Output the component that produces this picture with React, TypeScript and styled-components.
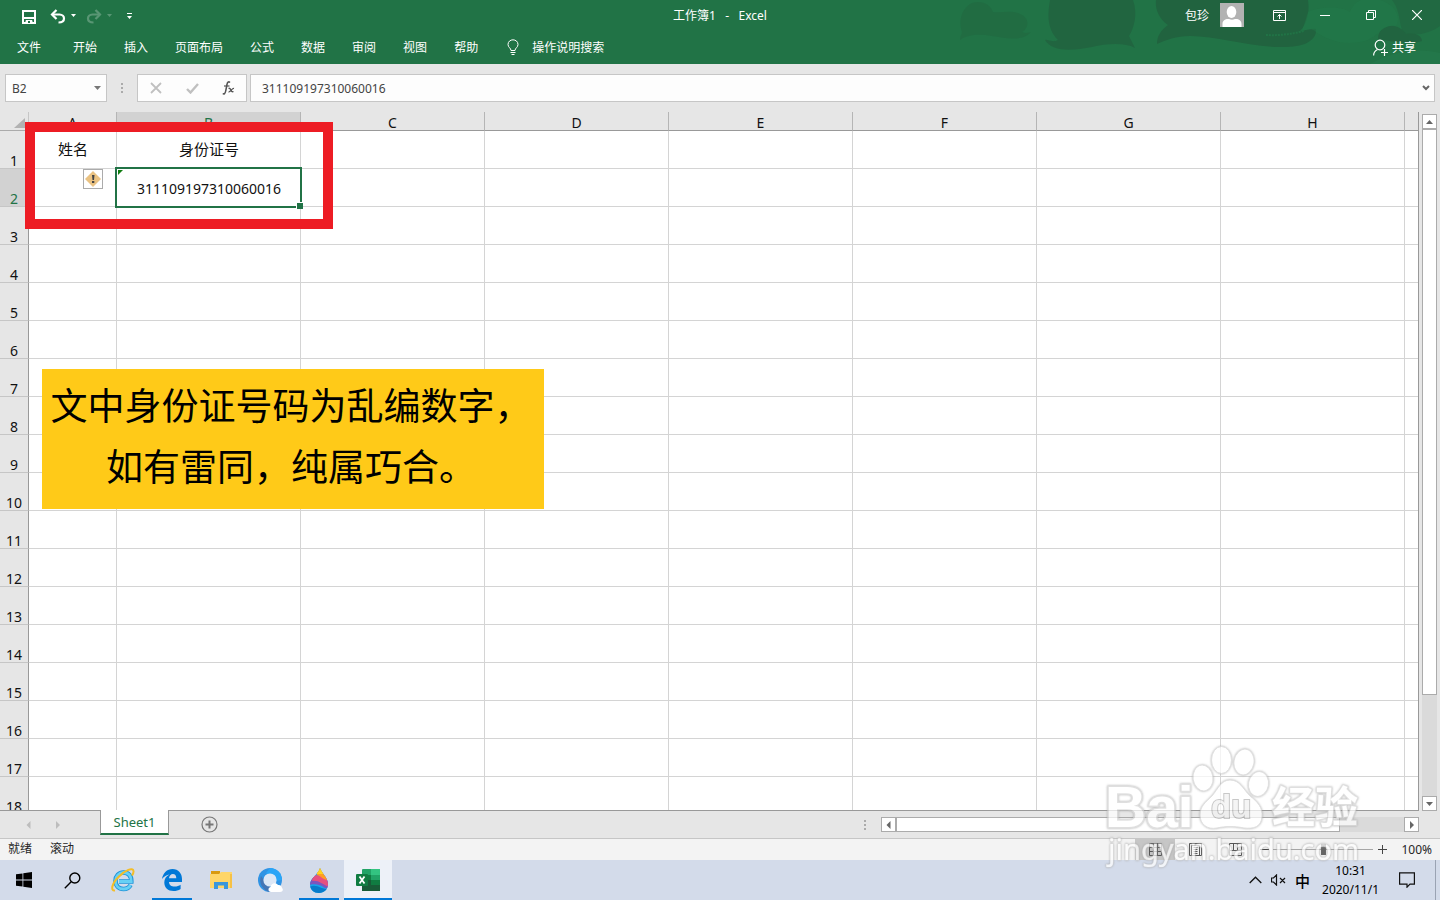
import React from "react";
import styled, { createGlobalStyle } from "styled-components";

const GREEN = "#217346";
const UI_FONT = '"Noto Sans", "Noto Sans CJK SC", sans-serif';

const GlobalStyle = createGlobalStyle`
  * { box-sizing: border-box; }
  body { margin: 0; font-family: ${UI_FONT}; font-size: 12px; color: #262626; }
  button { border: 0; padding: 0; background: none; color: inherit; font: inherit; }
  svg { display: block; }
`;

const Screen = styled.div`
  position: relative;
  display: flex;
  flex-direction: column;
  height: 100vh;
  overflow: hidden;
  background: #e6e6e6;
`;

/* ---------- header ---------- */

const Header = styled.header`
  position: relative;
  flex: none;
  background: ${GREEN};
  color: #fff;
`;

const HeaderArt = styled.svg`
  position: absolute;
  top: 0;
  right: 0;
`;

const TitleBar = styled.div`
  position: relative;
  display: grid;
  grid-template-columns: 1fr auto 1fr;
  align-items: center;
  height: 30px;
`;

const QuickAccess = styled.div`
  display: flex;
  align-items: center;
  padding: 3px 0 0 21px;
`;

const QuickButton = styled.button<{ $gap?: number; $dim?: boolean }>`
  margin-left: ${(p) => p.$gap ?? 0}px;
  opacity: ${(p) => (p.$dim ? 0.25 : 1)};
`;

const Title = styled.h1`
  margin: 0;
  font-size: 12px;
  font-weight: 400;
  white-space: pre;
`;

const Account = styled.div`
  display: flex;
  justify-content: flex-end;
  align-items: center;
`;

const Avatar = styled.svg`
  margin: 0 12px 0 11px;
  background: #b2b2b2;
`;

const WindowButton = styled.button`
  display: grid;
  place-items: center;
  width: 46px;
  height: 30px;
`;

const Ribbon = styled.nav`
  position: relative;
  display: flex;
  align-items: center;
  height: 34px;
  padding: 0 24px 0 17px;
`;

const RibbonTab = styled.button<{ $first?: boolean }>`
  margin-right: ${(p) => (p.$first ? 32 : 27)}px;
`;

const IconLabel = styled.button<{ $gap: number; $end?: boolean }>`
  display: flex;
  align-items: center;
  gap: ${(p) => p.$gap}px;
  margin-left: ${(p) => (p.$end ? "auto" : "2px")};
`;

/* ---------- formula bar ---------- */

const FormulaRow = styled.div`
  flex: none;
  display: flex;
  align-items: center;
  padding: 10px 5px;
`;

const Field = styled.div<{ $width?: number }>`
  display: flex;
  align-items: center;
  min-width: 0;
  height: 28px;
  flex: ${(p) => (p.$width ? `0 0 ${p.$width}px` : "1")};
  border: 1px solid #c6c6c6;
  background: #fdfdfd;
`;

const FieldInput = styled.input<{ $indent: number }>`
  flex: 1;
  width: 0;
  min-width: 0;
  padding: 0 0 0 ${(p) => p.$indent}px;
  border: 0;
  outline: 0;
  background: none;
  color: #444;
  font: 12px ${UI_FONT};
`;

const FieldIcon = styled.button`
  display: grid;
  place-items: center;
  width: 36px;
  height: 26px;
`;

const DropButton = styled.button`
  display: grid;
  place-items: center;
  width: 17px;
  height: 26px;
`;

const Grip = styled.svg<{ $side: number }>`
  flex: none;
  margin: 0 ${(p) => p.$side}px;
`;

/* ---------- grid ---------- */

const Workspace = styled.main`
  position: relative;
  flex: 1;
  min-height: 0;
  display: flex;
`;

const SheetPane = styled.div`
  flex: 1;
  min-width: 0;
  overflow: hidden;
  border-right: 1px solid #999;
  border-bottom: 1px solid #999;
  background: #fff;
`;

const Sheet = styled.table`
  width: 100%;
  table-layout: fixed;
  border-collapse: separate;
  border-spacing: 0;
  color: #111;
  font-size: 14px;
`;

const Col = styled.col<{ $w?: number }>`
  width: ${(p) => (p.$w ? `${p.$w}px` : "auto")};
`;

const Corner = styled.td`
  padding: 0;
  background: #e6e6e6;
  border-bottom: 1px solid #ababab;
  border-right: 1px solid #c6c6c6;
`;

const CornerMark = styled.svg`
  margin: 3px 0 0 14px;
`;

const ColHead = styled.th<{ $on?: boolean; $last?: boolean }>`
  height: 19px;
  padding: 4px 0 0;
  line-height: 14px;
  font-weight: 400;
  background: ${(p) => (p.$on ? "#d2d2d2" : "#e6e6e6")};
  color: ${(p) => (p.$on ? GREEN : "#111")};
  border-bottom: 1px solid #999;
  border-right: ${(p) => (p.$last ? "0" : "1px solid #b5b5b5")};
`;

const RowHead = styled.th<{ $on?: boolean }>`
  height: 38px;
  padding: 0;
  line-height: 14px;
  vertical-align: bottom;
  font-weight: 400;
  background: ${(p) => (p.$on ? "#d2d2d2" : "#e6e6e6")};
  color: ${(p) => (p.$on ? GREEN : "#111")};
  border-right: 1px solid #999;
  border-bottom: 1px solid #c6c6c6;
`;

const Cell = styled.td<{ $last?: boolean }>`
  position: relative;
  height: 38px;
  padding: 2px 0 0 1px;
  text-align: center;
  border-bottom: 1px solid #d4d4d4;
  border-right: ${(p) => (p.$last ? "0" : "1px solid #d4d4d4")};
`;

const CellLabel = styled.span`
  display: block;
  margin-bottom: 4px;
  font-size: 15px;
`;

const Selection = styled.div`
  position: absolute;
  z-index: 1;
  inset: -2px -2px -2px -2px;
  border: 2px solid ${GREEN};

  &::before {
    content: "";
    position: absolute;
    left: 1px;
    top: 1px;
    border-top: 5px solid #107c10;
    border-right: 5px solid transparent;
  }
  &::after {
    content: "";
    position: absolute;
    right: -3px;
    bottom: -3px;
    width: 6px;
    height: 6px;
    background: ${GREEN};
    border-left: 1px solid #fff;
    border-top: 1px solid #fff;
  }
`;

const WarningButton = styled.button`
  position: absolute;
  top: 0;
  right: 13px;
  display: grid;
  place-items: center;
  width: 20px;
  height: 20px;
  border: 1px solid #ababab;
  background: #fff;
`;

const Highlight = styled.div`
  position: absolute;
  z-index: 2;
  left: 25px;
  top: 10px;
  width: 308px;
  height: 107px;
  border: 10px solid #ed1c24;
`;

const Note = styled.p`
  position: absolute;
  z-index: 2;
  left: 42px;
  top: 257px;
  width: 502px;
  height: 140px;
  margin: 0;
  padding: 5px 4px 0 0;
  background: #ffca18;
  color: #000;
  font: 37px/61px "Noto Sans CJK SC", sans-serif;
  text-align: center;
  white-space: nowrap;
`;

/* ---------- scroll bars ---------- */

const ScrollBar = styled.div<{ $vertical?: boolean }>`
  display: flex;
  flex-direction: ${(p) => (p.$vertical ? "column" : "row")};
  flex: ${(p) => (p.$vertical ? "0 0 15px" : "538 1 0")};
  height: ${(p) => (p.$vertical ? "auto" : "15px")};
  margin: ${(p) => (p.$vertical ? "2px 3px 0" : "6px 21px 0 0")};
  background: #dadada;
`;

const ScrollArrow = styled.button`
  flex: none;
  display: grid;
  place-items: center;
  width: 15px;
  height: 15px;
  border: 1px solid #ababab;
  background: #fff;
`;

const ScrollThumb = styled.div<{ $part: number }>`
  flex: ${(p) => p.$part} 1 0;
  border: 1px solid #ababab;
  background: #fff;
`;

const ScrollRest = styled.div<{ $part: number }>`
  flex: ${(p) => p.$part} 1 0;
`;

/* ---------- sheet tabs and status ---------- */

const SheetBar = styled.div`
  flex: none;
  display: flex;
  height: 28px;
  border-bottom: 1px solid #c6c6c6;
`;

const TabStrip = styled.div`
  flex: 881 1 0;
  display: flex;
  align-items: center;
`;

const SheetNav = styled.div`
  display: flex;
  gap: 22px;
  width: 100px;
  padding-left: 25px;
`;

const SheetTab = styled.button`
  position: relative;
  align-self: flex-start;
  width: 69px;
  height: 25px;
  margin-top: -1px;
  border: 1px solid #999;
  border-top: 0;
  border-bottom: 2px solid ${GREEN};
  background: #fff;
  color: ${GREEN};
  font-size: 13px;
  line-height: 22px;
`;

const AddSheet = styled.button`
  margin-left: 32px;
`;

const TabGrip = styled(Grip)`
  margin: 0 13px 0 auto;
`;

const StatusBar = styled.footer`
  flex: none;
  display: flex;
  align-items: center;
  gap: 18px;
  height: 21px;
  padding: 0 8px;
  line-height: 18px;
  background: #f3f3f3;
`;

const StatusText = styled.span`
  padding-bottom: 2px;
`;

const ViewTools = styled.div`
  display: flex;
  align-items: center;
  margin-left: auto;
`;

const ViewButton = styled.button<{ $on?: boolean }>`
  display: grid;
  place-items: center;
  width: 40px;
  height: 21px;
  background: ${(p) => (p.$on ? "#c6c6c6" : "none")};
`;

const ZoomStep = styled.button`
  display: grid;
  place-items: center;
  width: 18px;
  height: 21px;
`;

const ZoomSlider = styled.input`
  appearance: none;
  width: 100px;
  height: 12px;
  margin: 0;
  background: linear-gradient(#a6a6a6, #a6a6a6) center / 100% 1px no-repeat;

  &::-webkit-slider-thumb {
    appearance: none;
    width: 5px;
    height: 11px;
    background: #666;
  }
`;

const ZoomValue = styled.span`
  margin-left: 10px;
`;

/* ---------- taskbar ---------- */

const Taskbar = styled.div`
  flex: none;
  display: flex;
  height: 40px;
  background: #d3dbea;
  color: #000;
`;

const TaskButton = styled.button<{ $running?: boolean; $active?: boolean }>`
  position: relative;
  display: grid;
  place-items: center;
  width: 48px;
  height: 40px;
  background: ${(p) => (p.$active ? "#edf1f8" : "none")};

  &::after {
    content: "";
    position: absolute;
    bottom: 0;
    left: ${(p) => (p.$active ? 0 : 4)}px;
    right: ${(p) => (p.$active ? 0 : 4)}px;
    height: ${(p) => (p.$running || p.$active ? 2 : 0)}px;
    background: #0078d7;
  }
`;

const AppList = styled.div`
  display: flex;
  gap: 1px;
  margin-left: 3px;
`;

const Tray = styled.div`
  display: flex;
  align-items: center;
  gap: 9px;
  margin-left: auto;
`;

const Ime = styled.button`
  font-size: 15px;
  font-weight: 500;
  color: #000;
`;

const Clock = styled.time`
  margin: 0 11px 0 3px;
  line-height: 19px;
  text-align: center;
`;

const ShowDesktop = styled.button`
  width: 5px;
  height: 40px;
  margin-left: 11px;
  border-left: 1px solid #9aa3b3;
`;

/* ---------- watermark ---------- */

const Watermark = styled.svg`
  position: absolute;
  z-index: 5;
  right: 70px;
  bottom: 26px;
  opacity: 0.72;
  pointer-events: none;
  filter: drop-shadow(0 0 1px #999);
`;

const columns = ["A", "B", "C", "D", "E", "F", "G", "H"];
const rows = Array.from({ length: 18 }, (_, i) => i + 1);
const ribbonTabs = ["文件", "开始", "插入", "页面布局", "公式", "数据", "审阅", "视图", "帮助"];

const Triangle = ({ dir, color = "#666" }: { dir: "up" | "down" | "left" | "right"; color?: string }) => {
  const d = {
    up: "M0 6 L3.5 2 L7 6Z",
    down: "M0 2 H7 L3.5 6Z",
    left: "M5.500 0 V8 L1.500 4Z",
    right: "M2 0 V8 L6 4Z",
  }[dir];
  return (
    <svg width="7" height="8" viewBox="0 0 7 8" aria-hidden="true">
      <path d={d} fill={color} />
    </svg>
  );
};

const GripDots = () => (
  <>
    <rect x="0" y="0" width="2" height="2" fill="#ababab" />
    <rect x="0" y="4" width="2" height="2" fill="#ababab" />
    <rect x="0" y="8" width="2" height="2" fill="#ababab" />
  </>
);

const UndoIcon = ({ flip }: { flip?: boolean }) => (
  <svg width="16" height="16" viewBox="0 0 16 16" fill="none" stroke="#fff" strokeWidth="2.200">
    <g transform={flip ? "translate(16 0) scale(-1 1)" : undefined}>
      <path d="M2 5.500 H9.500 C12.500 5.500 14 7.500 14 9.500 C14 12 12 13.500 8.500 13.500" />
      <path d="M6.500 1 L2 5.500 L6.500 10" />
    </g>
  </svg>
);

const SmallCaret = () => (
  <svg width="5" height="5" viewBox="0 0 5 5">
    <path d="M0 0 H5 L2.500 3Z" fill="#fff" />
  </svg>
);

function AppHeader() {
  return (
    <Header>
      <HeaderArt width="500" height="64" viewBox="0 0 500 64" aria-hidden="true">
        <g fill="#21633f">
          <path
            opacity=".45"
            d="M22 32 C18 20 22 8 32 3 C40 0 50 3 53 12 C62 13 72 10 80 14 C90 18 89 28 82 32 C86 34 91 32 91 32 C82 42 66 38 52 36 C40 34 28 34 20 40 C20 36 22 34 22 32Z"
          />
          <path
            opacity=".85"
            d="M110 0 H193 C198 14 194 28 189 36 L195 48 C184 42 166 44 152 47 C132 51 112 52 105 40 C108 39 112 43 118 40 C106 28 108 12 110 0Z"
          />
          <path d="M216 0 H368 C370 14 366 26 359 32 C366 30 372 28 376 29 C377 38 368 47 346 47 C310 48 280 36 250 36 C236 36 226 40 217 44 C217 36 221 30 228 25 C218 18 215 8 216 0Z" />
          <path opacity=".6" d="M452 0 H500 V26 C492 32 480 36 466 34 C458 30 462 12 452 0Z" />
          <path opacity=".9" d="M438 39 C438 30 446 25 454 26 C460 27 464 31 466 34 C474 32 482 35 482 41 C474 44 452 42 438 39Z" />
        </g>
        <path d="M368 12 C380 6 402 6 410 12 C416 -4 430 -2 440 0 C454 4 462 16 456 26 C440 24 438 40 420 42 C400 46 385 38 376 32 C372 28 366 30 362 31Z" fill="#227a4a" opacity=".5" />
        <path d="M326 35 q18 1 38 -4" fill="none" stroke={GREEN} strokeWidth="2" strokeDasharray="2 1" />
        <path d="M430 64 C455 50 480 48 500 53 V64Z" fill="#25794c" opacity=".7" />
      </HeaderArt>
      <TitleBar>
        <QuickAccess>
          <QuickButton aria-label="保存">
            <svg width="16" height="16" viewBox="0 0 16 16" fill="none" stroke="#fff">
              <path d="M2 2 H14 V14 H2Z" strokeWidth="2" />
              <path d="M2 9 H14" strokeWidth="2" />
              <path d="M5 14 V11.500 H11 V14" strokeWidth="1" fill="#fff" />
              <rect x="7" y="12" width="2" height="2" fill={GREEN} stroke="none" />
            </svg>
          </QuickButton>
          <QuickButton $gap={13} aria-label="撤消">
            <UndoIcon />
          </QuickButton>
          <QuickButton $gap={5} aria-label="撤消列表">
            <SmallCaret />
          </QuickButton>
          <QuickButton $gap={10} $dim aria-label="恢复">
            <UndoIcon flip />
          </QuickButton>
          <QuickButton $gap={5} $dim aria-label="恢复列表">
            <SmallCaret />
          </QuickButton>
          <QuickButton $gap={15} aria-label="自定义快速访问工具栏">
            <svg width="5" height="7" viewBox="0 0 5 7">
              <path d="M0 0 H5 V1 H0Z M0 3 H5 L2.500 6Z" fill="#fff" />
            </svg>
          </QuickButton>
        </QuickAccess>
        <Title>{"工作簿1   -   Excel"}</Title>
        <Account>
          <span>包珍</span>
          <Avatar width="24" height="24" viewBox="0 0 24 24" aria-hidden="true">
            <ellipse cx="11.500" cy="9" rx="4.800" ry="6" fill="#fff" />
            <path d="M2.500 24 V21 C2.500 17 6 15.500 9 16 C11 17 13 17 15 16 C18 15.500 21.500 17 21.500 21 V24Z" fill="#fff" />
          </Avatar>
          <WindowButton aria-label="功能区显示选项">
            <svg width="13" height="11" viewBox="0 0 13 11" fill="none" stroke="#fff">
              <path d="M.5 .5 H12.500 V10.500 H.5Z M.5 2.500 H12.500 M6.500 9 V4.500 M4.500 6.500 L6.500 4.500 L8.500 6.500" />
            </svg>
          </WindowButton>
          <WindowButton aria-label="最小化">
            <svg width="10" height="1" viewBox="0 0 10 1">
              <rect width="10" height="1" fill="#fff" />
            </svg>
          </WindowButton>
          <WindowButton aria-label="还原">
            <svg width="10" height="10" viewBox="0 0 10 10" fill="none" stroke="#fff">
              <path d="M.5 2.500 H7.500 V9.500 H.5Z M2.500 2.500 V.5 H9.500 V7.500 H7.500" />
            </svg>
          </WindowButton>
          <WindowButton aria-label="关闭">
            <svg width="10" height="10" viewBox="0 0 10 10" stroke="#fff" strokeWidth="1.200">
              <path d="M0 0 L10 10 M10 0 L0 10" />
            </svg>
          </WindowButton>
        </Account>
      </TitleBar>
      <Ribbon>
        {ribbonTabs.map((tab, i) => (
          <RibbonTab key={tab} $first={i === 0}>
            {tab}
          </RibbonTab>
        ))}
        <IconLabel $gap={13}>
          <svg width="12" height="17" viewBox="0 0 12 17" fill="none" stroke="#fff">
            <path d="M4 11.500 C4 9 1 8.500 1 5.500 C1 2.500 3.500 .8 6 .8 C8.500 .8 11 2.500 11 5.500 C11 8.500 8 9 8 11.500Z M3.500 13.500 H8.500 M4.500 15.500 H7.500" />
          </svg>
          操作说明搜索
        </IconLabel>
        <IconLabel $gap={4} $end>
          <svg width="15" height="17" viewBox="0 0 15 17" fill="none" stroke="#fff" strokeWidth="1.200">
            <circle cx="7" cy="6" r="4.800" />
            <path d="M.6 16.500 C.6 13 2.500 11.500 4.500 10.500 M8 13.500 H15 M11.500 10 V17" />
          </svg>
          共享
        </IconLabel>
      </Ribbon>
    </Header>
  );
}

function FormulaBar() {
  return (
    <FormulaRow>
      <Field $width={102}>
        <FieldInput $indent={6} aria-label="名称框" defaultValue="B2" />
        <DropButton aria-label="名称列表">
          <Triangle dir="down" color="#777" />
        </DropButton>
      </Field>
      <Grip $side={14} width="2" height="10" viewBox="0 0 2 10">
        <GripDots />
      </Grip>
      <Field $width={110}>
        <FieldIcon aria-label="取消">
          <svg width="12" height="12" viewBox="0 0 12 12" stroke="#c0c0c0" strokeWidth="1.800">
            <path d="M1 1 L11 11 M11 1 L1 11" />
          </svg>
        </FieldIcon>
        <FieldIcon aria-label="输入">
          <svg width="13" height="11" viewBox="0 0 13 11" fill="none" stroke="#c0c0c0" strokeWidth="2.400">
            <path d="M1 6 L4.500 9.500 L12 1" />
          </svg>
        </FieldIcon>
        <FieldIcon aria-label="插入函数">
          <svg width="13" height="14" viewBox="0 0 13 14" fill="none" stroke="#555">
            <path d="M8 1.500 C6.500 0 5.300 1.500 5 3.500 L3.700 10 C3.300 12.500 2 13.500 .8 12.500" strokeWidth="1.500" />
            <path d="M2 5 H7.500" strokeWidth="1.200" />
            <path d="M6.500 7.500 C9 6 8.500 12 11.500 10.500 M12 7.500 C10 7 8.500 11.500 6.500 10.800" strokeWidth="1.300" />
          </svg>
        </FieldIcon>
      </Field>
      <Grip $side={1} width="1" height="10" aria-hidden="true" />
      <Field>
        <FieldInput $indent={11} aria-label="编辑栏" defaultValue="311109197310060016" />
        <DropButton aria-label="展开编辑栏">
          <svg width="8" height="6" viewBox="0 0 8 6" fill="none" stroke="#666" strokeWidth="2">
            <path d="M1 1 L4 4 L7 1" />
          </svg>
        </DropButton>
      </Field>
    </FormulaRow>
  );
}

function cellContent(id: string) {
  if (id === "A1") return <CellLabel>姓名</CellLabel>;
  if (id === "B1") return <CellLabel>身份证号</CellLabel>;
  if (id === "A2")
    return (
      <WarningButton aria-label="错误检查">
        <svg width="16" height="16" viewBox="0 0 16 16">
          <path d="M8 0 L16 8 L8 16 L0 8Z" fill="#eac282" />
          <path d="M7 4 H9.500 L9 9 H7.500Z M7 10 H9.300 V12 H7Z" fill="#444" />
        </svg>
      </WarningButton>
    );
  if (id === "B2")
    return (
      <>
        311109197310060016
        <Selection />
      </>
    );
  return null;
}

function Grid() {
  return (
    <Workspace>
      <SheetPane>
        <Sheet>
          <colgroup>
            <Col $w={29} />
            <Col $w={88} />
            {columns.slice(1).map((c) => (
              <Col key={c} $w={184} />
            ))}
            <Col />
          </colgroup>
          <thead>
            <tr>
              <Corner>
                <CornerMark width="12" height="12" viewBox="0 0 12 12">
                  <path d="M11 1 V11 H0Z" fill="#b2b2b2" />
                </CornerMark>
              </Corner>
              {columns.map((c) => (
                <ColHead key={c} scope="col" $on={c === "B"}>
                  {c}
                </ColHead>
              ))}
              <ColHead $last />
            </tr>
          </thead>
          <tbody>
            {rows.map((r) => (
              <tr key={r}>
                <RowHead scope="row" $on={r === 2}>
                  {r}
                </RowHead>
                {columns.map((c) => (
                  <Cell key={c}>{cellContent(`${c}${r}`)}</Cell>
                ))}
                <Cell $last />
              </tr>
            ))}
          </tbody>
        </Sheet>
      </SheetPane>
      <ScrollBar $vertical>
        <ScrollArrow aria-label="向上滚动">
          <Triangle dir="up" />
        </ScrollArrow>
        <ScrollThumb $part={566} />
        <ScrollRest $part={101} />
        <ScrollArrow aria-label="向下滚动">
          <Triangle dir="down" />
        </ScrollArrow>
      </ScrollBar>
      <Highlight />
      <Note>
        文中身份证号码为乱编数字，
        <br />
        如有雷同，纯属巧合。
      </Note>
    </Workspace>
  );
}

function SheetTabs() {
  return (
    <SheetBar>
      <TabStrip>
        <SheetNav>
          <button aria-label="上一张工作表">
            <Triangle dir="left" color="#bdbdbd" />
          </button>
          <button aria-label="下一张工作表">
            <Triangle dir="right" color="#bdbdbd" />
          </button>
        </SheetNav>
        <SheetTab>Sheet1</SheetTab>
        <AddSheet aria-label="新工作表">
          <svg width="17" height="17" viewBox="0 0 17 17" fill="none" stroke="#777">
            <circle cx="8.500" cy="8.500" r="7.500" strokeWidth="1.200" />
            <path d="M8.500 4.500 V12.500 M4.500 8.500 H12.500" strokeWidth="2" />
          </svg>
        </AddSheet>
        <TabGrip $side={0} width="4" height="10" viewBox="0 0 4 10">
          <GripDots />
        </TabGrip>
      </TabStrip>
      <ScrollBar>
        <ScrollArrow aria-label="向左滚动">
          <Triangle dir="left" />
        </ScrollArrow>
        <ScrollThumb $part={444} />
        <ScrollRest $part={64} />
        <ScrollArrow aria-label="向右滚动">
          <Triangle dir="right" />
        </ScrollArrow>
      </ScrollBar>
    </SheetBar>
  );
}

function Status() {
  return (
    <StatusBar>
      <StatusText>就绪</StatusText>
      <StatusText>滚动</StatusText>
      <ViewTools>
        <ViewButton $on aria-label="普通">
          <svg width="13" height="13" viewBox="0 0 13 13" fill="none" stroke="#555">
            <path d="M.5 .5 H12.500 V12.500 H.5Z M.5 4.500 H12.500 M.5 8.500 H12.500 M4.500 .5 V12.500 M8.500 .5 V12.500" />
          </svg>
        </ViewButton>
        <ViewButton aria-label="页面布局视图">
          <svg width="13" height="13" viewBox="0 0 13 13" fill="none" stroke="#555">
            <path d="M.5 .5 H12.500 V12.500 H.5Z M2.500 2.500 H10.500 V12.500 M2.500 2.500 V12.500 M4.500 4.500 H8.500 M4.500 6.500 H8.500 M4.500 8.500 H8.500 M4.500 10.500 H8.500" />
          </svg>
        </ViewButton>
        <ViewButton aria-label="分页预览">
          <svg width="13" height="13" viewBox="0 0 13 13" fill="none" stroke="#555">
            <path d="M.5 12.500 V.5 H12.500 V12.500Z M4.500 .5 V7.500 M8.500 .5 V7.500 M.5 7.500 H12.500" />
          </svg>
        </ViewButton>
        <ZoomStep aria-label="缩小">
          <svg width="9" height="9" viewBox="0 0 9 9">
            <path d="M0 4 H9 V5 H0Z" fill="#444" />
          </svg>
        </ZoomStep>
        <ZoomSlider type="range" min={10} max={190} defaultValue={100} aria-label="显示比例" />
        <ZoomStep aria-label="放大">
          <svg width="9" height="9" viewBox="0 0 9 9">
            <path d="M0 4 H9 V5 H0Z M4 0 H5 V9 H4Z" fill="#444" />
          </svg>
        </ZoomStep>
        <ZoomValue>100%</ZoomValue>
      </ViewTools>
    </StatusBar>
  );
}

function WindowsTaskbar() {
  return (
    <Taskbar>
      <TaskButton aria-label="开始菜单">
        <svg width="16" height="16" viewBox="0 0 16 16">
          <path d="M0 2.300 L6.500 1.400 V7.600 H0Z M7.300 1.300 L16 0 V7.600 H7.300Z M0 8.400 H6.500 V14.600 L0 13.700Z M7.300 8.400 H16 V16 L7.300 14.700Z" />
        </svg>
      </TaskButton>
      <TaskButton aria-label="搜索">
        <svg width="17" height="17" viewBox="0 0 17 17" fill="none" stroke="#000" strokeWidth="1.400">
          <circle cx="10.800" cy="6" r="5" />
          <path d="M7.200 9.800 L.8 16.200" />
        </svg>
      </TaskButton>
      <AppList>
        <TaskButton aria-label="Internet Explorer">
          <svg width="24" height="24" viewBox="0 0 24 24" fill="none">
            <path d="M19.500 17 C18 20 15.500 21 12.500 21 C7.500 21 4.500 17.500 4.500 13 C4.500 8 8 4.500 12.500 4.500 C17.500 4.500 20.500 8 20.300 13.500 H8" stroke="#1f93d8" strokeWidth="4.600" />
            <path d="M19.500 17 C18 20 15.500 21 12.500 21 C7.500 21 4.500 17.500 4.500 13 C4.500 8 8 4.500 12.500 4.500 C17.500 4.500 20.500 8 20.300 13.500 H8" stroke="#66d0f5" strokeWidth="2.800" />
            <path d="M4 22.500 C-1 23 1 15 8 8.500 C14 2 22 -1 22.500 3 C22.700 4.500 22 6 21 7.500" stroke="#f4bd27" strokeWidth="2" />
          </svg>
        </TaskButton>
        <TaskButton $running aria-label="Microsoft Edge">
          <svg width="20" height="22" viewBox="0 0 20 22">
            <path
              d="M0 10 C1 4 5 0 10.500 0 C16.500 0 20 4.500 20 10 V13 H7 C7 16 9.500 17.600 12.500 17.600 C15 17.600 17 16.800 18.600 15.800 V20 C16.500 21.400 14 22 11.500 22 C6 22 2.300 18.500 2.300 13.500 C2.300 10 4 7.200 7.500 5.500 C4.500 6 2 7.500 0 10Z M7 9.300 H14.300 C14.300 6.500 13 5 10.900 5 C8.800 5 7.400 6.700 7 9.300Z"
              fill="#0078d7"
              fillRule="evenodd"
            />
          </svg>
        </TaskButton>
        <TaskButton aria-label="文件资源管理器">
          <svg width="22" height="20" viewBox="0 0 22 20">
            <path d="M1 1 H10 V5 H1Z" fill="#d99a0f" />
            <path d="M0 4 H9 L11 2 H22 V18 H0Z" fill="#ffd669" />
            <path d="M20 4 H22 V18 H20Z" fill="#f6c146" />
            <path d="M4 19 V12 H18 V19 H14 V15.500 H8 V19Z" fill="#3b97dc" />
          </svg>
        </TaskButton>
        <TaskButton aria-label="QQ浏览器">
          <svg width="25" height="25" viewBox="0 0 25 25">
            <circle cx="12" cy="12" r="12" fill="#2f93e4" />
            <path d="M12 0 A12 12 0 0 1 24 12 L18 13 L8 5Z" fill="#2aa5f7" />
            <path d="M3 8 A12 12 0 0 0 12 24 V18 L6 12Z" fill="#4576b5" />
            <circle cx="12" cy="12" r="6.600" fill="#dce7f6" />
            <path d="M13 24 C10 24 9.500 20 12.500 19 C13 15 18 14 20 17 C22 16.500 24 18 24 20 C26 22 24 24 22 24Z" fill="#fff" />
          </svg>
        </TaskButton>
        <TaskButton $running aria-label="画图 3D">
          <svg width="20" height="25" viewBox="0 0 20 25">
            <defs>
              <clipPath id="drop">
                <path d="M11 0 C12 4 19 10 19 16 C19 21.500 15 25 10 25 C5 25 1 21.500 1 16.500 C1 10 9 7 11 0Z" />
              </clipPath>
            </defs>
            <g clipPath="url(#drop)">
              <rect width="20" height="25" fill="#17a5ec" />
              <path d="M0 8 L20 12 V21 C14 21 12 14 0 17Z" fill="#7d55bd" />
              <path d="M4 7 L20 8 V19 C14 17 10 12 3 13Z" fill="#e8507f" />
              <path d="M5 0 H20 V12 C14 12 12 8 8 7Z" fill="#ff9d23" />
              <path d="M8 0 H14 V6 H8Z" fill="#ffd21f" />
              <path d="M0 19 C8 15 12 22 20 21 V25 H0Z" fill="#087ccb" />
            </g>
          </svg>
        </TaskButton>
        <TaskButton $active aria-label="Excel">
          <svg width="24" height="22" viewBox="0 0 24 22">
            <rect x="6" width="18" height="22" rx="1" fill="#21a366" />
            <rect x="15" width="9" height="6" fill="#33c481" />
            <rect x="6" y="6" width="9" height="5" fill="#107c41" />
            <rect x="6" y="11" width="9" height="6" fill="#185c37" />
            <rect x="15" y="11" width="9" height="6" fill="#107c41" />
            <rect x="6" y="16" width="18" height="6" fill="#185c37" />
            <rect y="5" width="12" height="12" rx="1" fill="#107c41" />
            <path d="M3.500 7.500 L8.500 14.500 M8.500 7.500 L3.500 14.500" stroke="#fff" strokeWidth="1.800" />
          </svg>
        </TaskButton>
      </AppList>
      <Tray>
        <button aria-label="显示隐藏的图标">
          <svg width="13" height="8" viewBox="0 0 13 8" fill="none" stroke="#111" strokeWidth="1.300">
            <path d="M.7 7 L6.500 1.200 L12.300 7" />
          </svg>
        </button>
        <button aria-label="静音">
          <svg width="15" height="12" viewBox="0 0 15 12" fill="none" stroke="#111">
            <path d="M.5 4 H2.500 L5.500 1 V11 L2.500 8 H.5Z M9 4 L14 9 M14 4 L9 9" strokeWidth="1.200" />
          </svg>
        </button>
        <Ime>中</Ime>
        <Clock>
          10:31
          <br />
          2020/11/1
        </Clock>
        <button aria-label="操作中心">
          <svg width="16" height="16" viewBox="0 0 16 16" fill="none" stroke="#111" strokeWidth="1.200">
            <path d="M.6 .8 H15.400 V12.200 H11 L8 15.200 V12.200 H.6Z" />
          </svg>
        </button>
        <ShowDesktop aria-label="显示桌面" />
      </Tray>
    </Taskbar>
  );
}

function BaiduMark() {
  return (
    <Watermark width="270" height="134" viewBox="0 0 270 134">
      <g fill="#fff" stroke="#d4d4d4" strokeWidth="1">
        <ellipse cx="121.500" cy="20" rx="10" ry="13.500" />
        <ellipse cx="144" cy="22" rx="10" ry="13" transform="rotate(10 144 22)" />
        <ellipse cx="103" cy="38" rx="10" ry="13" transform="rotate(-8 103 38)" />
        <ellipse cx="158.500" cy="44" rx="10" ry="12.500" transform="rotate(10 158.500 44)" />
        <path d="M130 40 C140 40 143 49 150 56 C158 62 163 68 162 77 C161 87 154 89 144 88 C134 86 126 86 117 88 C107 90 100 84 100 75 C100 66 106 62 112 56 C118 49 121 40 130 40Z" />
        <g fontFamily='"Liberation Sans", sans-serif' fontWeight="700" paintOrder="stroke">
          <text x="5" y="87" fontSize="57" strokeWidth="3">
            Bai
          </text>
          <text x="111" y="78" fontSize="33" fill="#f2f2f2" stroke="#b4b4b4" strokeWidth="2">
            du
          </text>
        </g>
        <text x="172" y="83" fontSize="43" fontFamily='"Noto Sans CJK SC", sans-serif' fontWeight="700" strokeWidth="2" paintOrder="stroke">
          经验
        </text>
        <text x="8" y="120" fontSize="29" fontFamily='"Noto Sans", sans-serif' paintOrder="stroke">
          jingyan.baidu.com
        </text>
      </g>
    </Watermark>
  );
}

export default function App() {
  return (
    <Screen>
      <GlobalStyle />
      <AppHeader />
      <FormulaBar />
      <Grid />
      <SheetTabs />
      <Status />
      <WindowsTaskbar />
      <BaiduMark />
    </Screen>
  );
}
